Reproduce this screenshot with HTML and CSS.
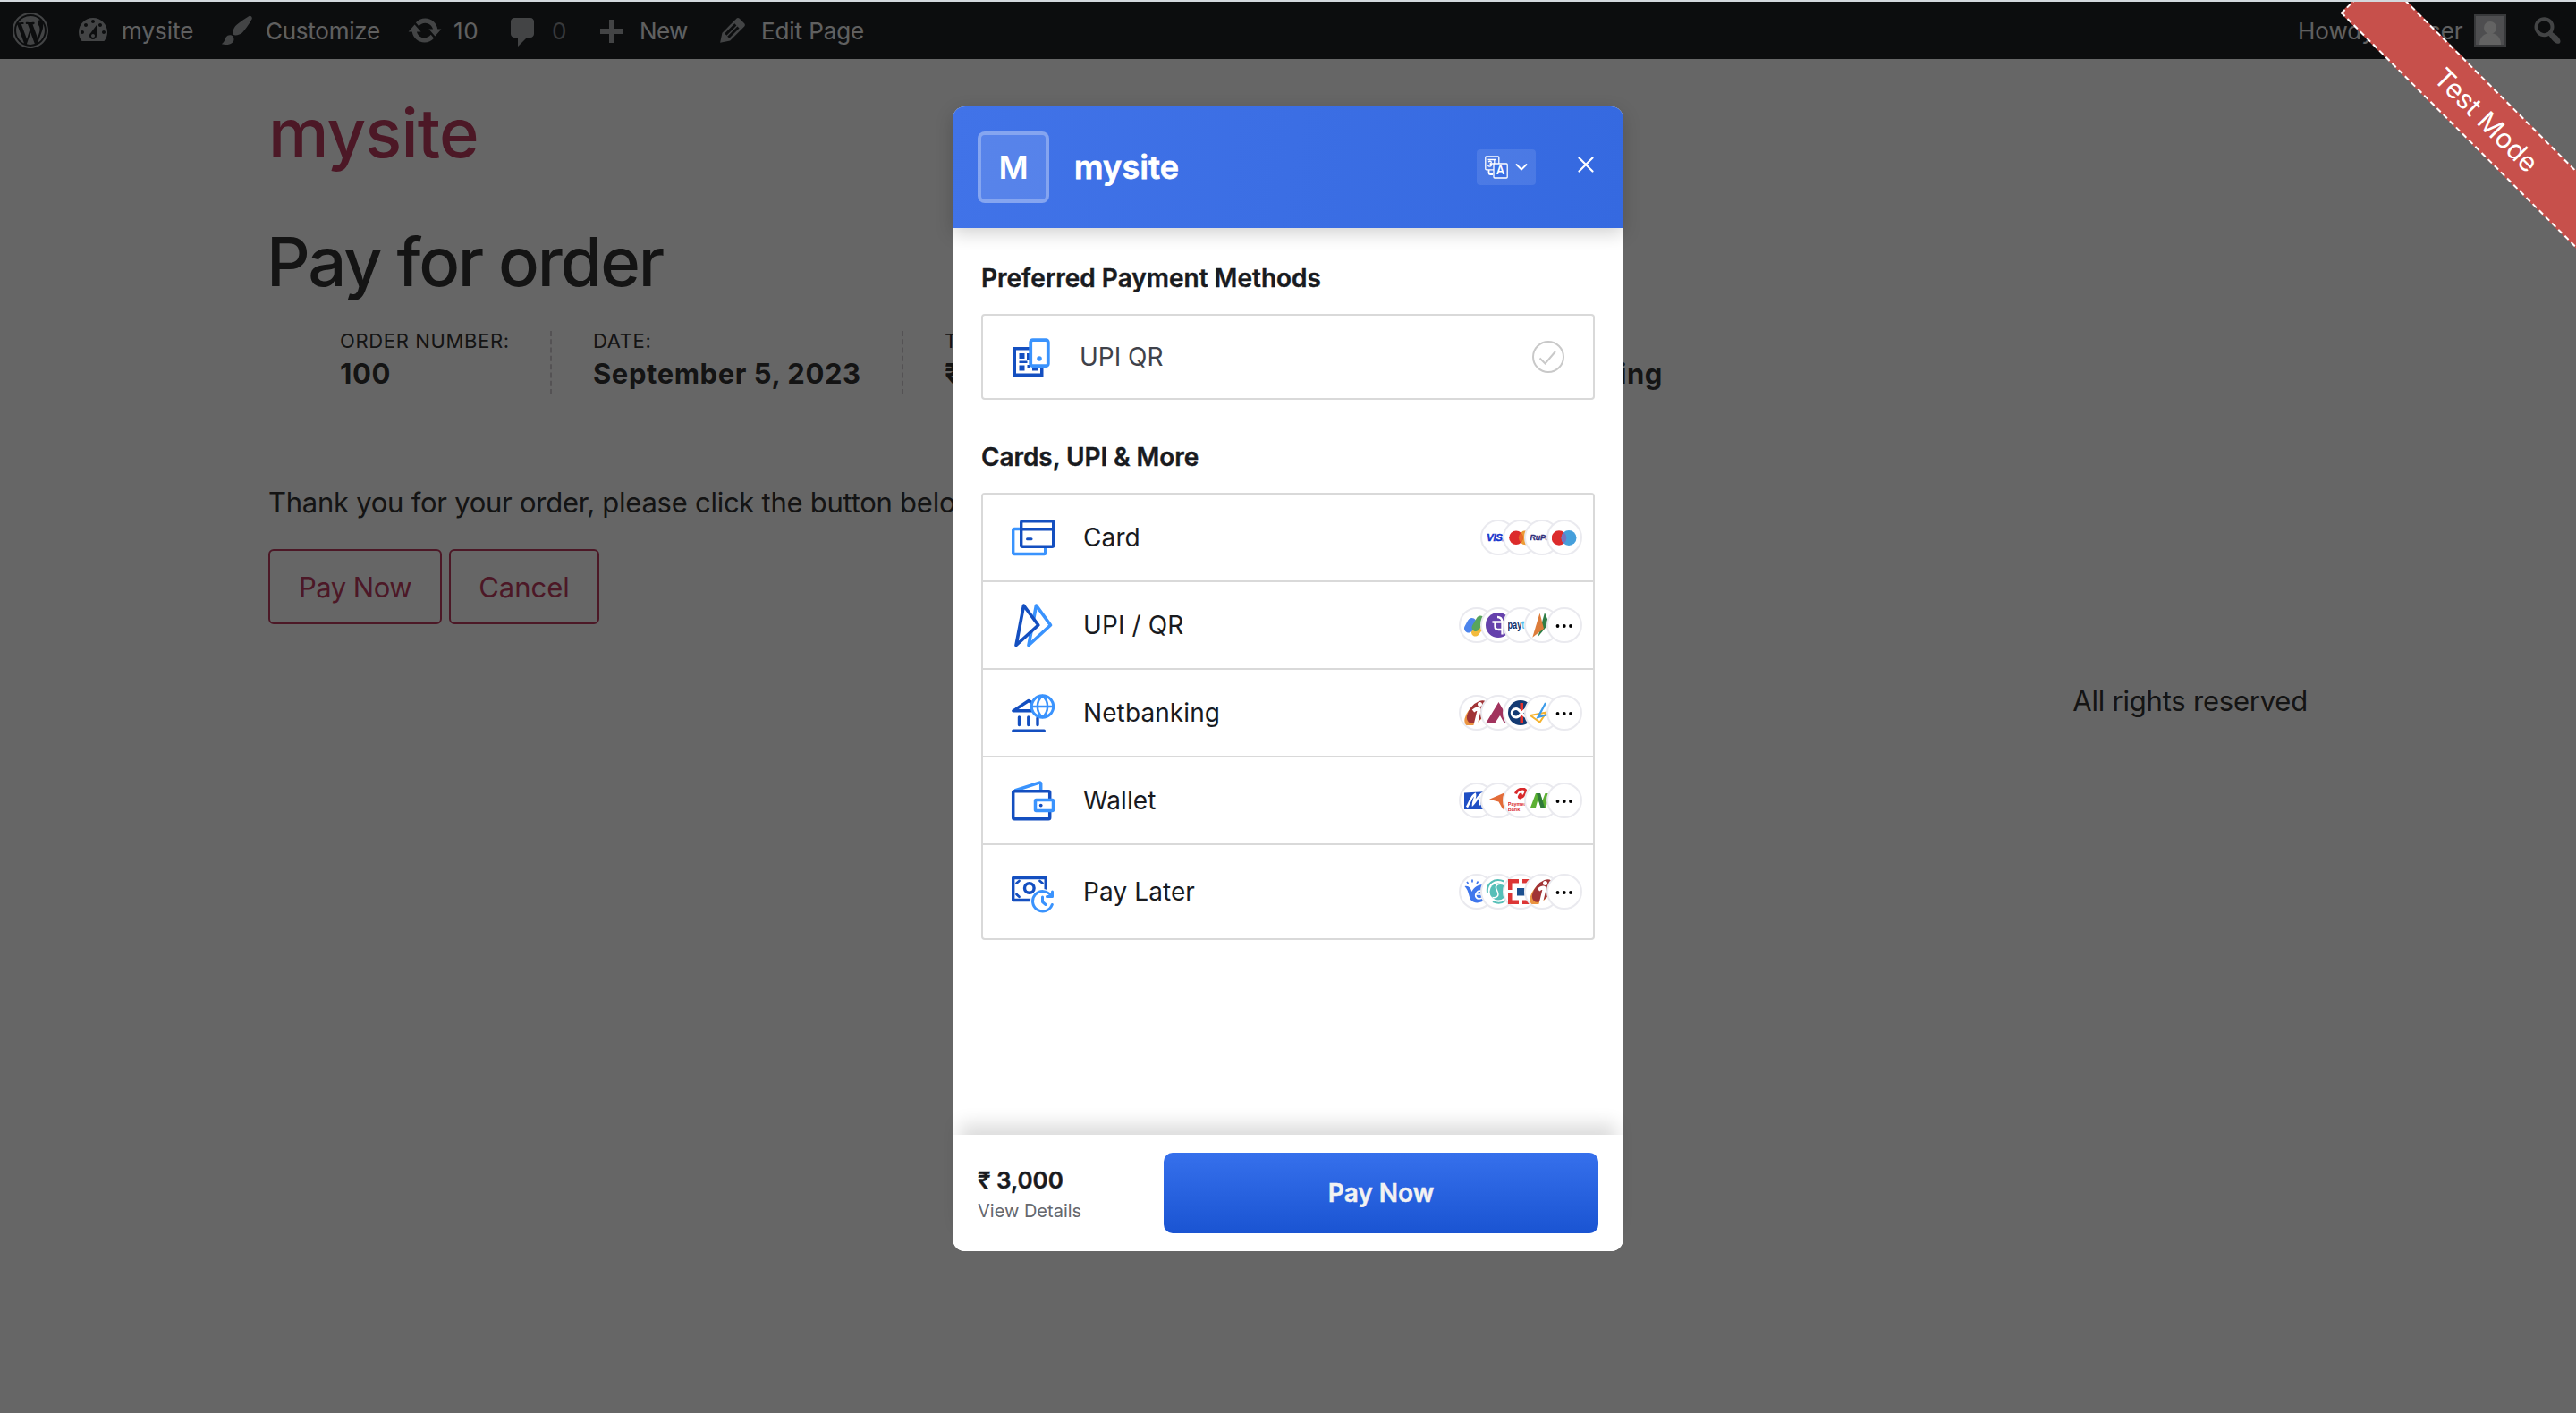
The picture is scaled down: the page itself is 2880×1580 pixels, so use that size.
FILE: index.html
```html
<!DOCTYPE html>
<html lang="en">
<head>
<meta charset="utf-8">
<title>Pay for order – mysite</title>
<link rel="stylesheet" href="styles.css">
</head>
<body>
<div class="window-edge"></div>
<div class="screen">

  <div class="adminbar">
    <div class="ab-item ab-logo"><svg class="dash" viewBox="0 0 20 20"><path d="M20 10c0-5.52-4.48-10-10-10S0 4.48 0 10s4.48 10 10 10 10-4.48 10-10zM10 1.01c4.97 0 8.99 4.02 8.99 8.99s-4.02 8.99-8.99 8.99S1.01 14.97 1.01 10 5.03 1.01 10 1.01zM8.01 14.82L4.96 6.61c.49-.03 1.05-.08 1.05-.08.43-.05.38-1.01-.06-.99 0 0-1.29.1-2.13.1-.15 0-.33 0-.52-.01 1.44-2.17 3.9-3.6 6.7-3.6 2.09 0 3.99.79 5.41 2.09-.6-.08-1.45.35-1.45 1.42 0 .66.38 1.22.79 1.88.31.54.5 1.22.5 2.21 0 1.34-1.27 4.48-1.27 4.48l-2.71-7.5c.48-.03.75-.16.75-.16.43-.05.38-1.1-.05-1.08 0 0-1.3.11-2.14.11-.78 0-2.11-.11-2.11-.11-.43-.02-.48 1.06-.05 1.08l.84.08 1.12 3.04zm6.02 2.15L16.64 10s.67-1.69.39-3.81c.63 1.14.94 2.42.94 3.81 0 2.96-1.56 5.58-3.94 6.97zM2.68 6.77L6.5 17.25c-2.67-1.3-4.47-4.08-4.47-7.25 0-1.16.2-2.23.65-3.23zm7.45 4.53l2.29 6.25c-.75.27-1.57.42-2.42.42-.72 0-1.41-.11-2.06-.3z"/></svg></div>
    <div class="ab-item ab-site"><svg class="dash" viewBox="0 0 20 20"><path fill-rule="evenodd" d="M3.76 16h12.48c1.1-1.37 1.76-3.11 1.76-5 0-4.42-3.58-8-8-8s-8 3.58-8 8c0 1.89.66 3.63 1.76 5zM10 4c.55 0 1 .45 1 1s-.45 1-1 1-1-.45-1-1 .45-1 1-1zM6 6c.55 0 1 .45 1 1s-.45 1-1 1-1-.45-1-1 .45-1 1-1zm8 0c.55 0 1 .45 1 1s-.45 1-1 1-1-.45-1-1 .45-1 1-1zm-5.37 5.55L12 7v6c0 1.1-.9 2-2 2s-2-.9-2-2c0-.57.24-1.08.63-1.45zM4 10c.55 0 1 .45 1 1s-.45 1-1 1-1-.45-1-1 .45-1 1-1zm12 0c.55 0 1 .45 1 1s-.45 1-1 1-1-.45-1-1 .45-1 1-1zm-5 3c0-.55-.45-1-1-1s-1 .45-1 1 .45 1 1 1 1-.45 1-1z"/></svg><span>mysite</span></div>
    <div class="ab-item ab-customize"><svg class="dash" viewBox="0 0 20 20"><path d="M18.33 3.57s.27-.8-.31-1.36c-.53-.52-1.22-.24-1.22-.24-.61.3-5.76 3.47-7.67 5.57-.86.96-2.06 3.79-1.09 4.82.92.98 3.96-.17 4.79-1 2.06-2.06 5.21-7.17 5.5-7.79zM1.4 17.65c2.37-1.56 1.46-3.41 3.23-4.64.93-.65 2.22-.62 3.08.29.63.67.8 2.57-.16 3.46-1.57 1.45-4 1.55-6.15.89z"/></svg><span>Customize</span></div>
    <div class="ab-item ab-updates"><svg class="dash" viewBox="0 0 20 20"><path d="M10.2 3.28c3.53 0 6.43 2.61 6.92 6h2.08l-3.5 4-3.5-4h2.32c-.45-1.97-2.21-3.45-4.32-3.45-1.45 0-2.73.71-3.54 1.78L4.95 5.66C6.23 4.2 8.11 3.28 10.2 3.28zm-.4 13.44c-3.52 0-6.43-2.61-6.92-6H.8l3.5-4c1.17 1.33 2.33 2.67 3.5 4H5.48c.45 1.97 2.21 3.45 4.32 3.45 1.45 0 2.73-.71 3.54-1.78l1.71 1.95c-1.28 1.46-3.15 2.38-5.25 2.38z"/></svg><span>10</span></div>
    <div class="ab-item ab-comments"><svg class="dash" viewBox="0 -1 20 20"><path d="M5 2h9c1.1 0 2 .9 2 2v7c0 1.1-.9 2-2 2h-2l-5 5v-5H5c-1.1 0-2-.9-2-2V4c0-1.1.9-2 2-2z"/></svg><span>0</span></div>
    <div class="ab-item ab-new"><svg class="dash" viewBox="0 -2 20 20"><path d="M17 7v3h-5v5H9v-5H4V7h5V2h3v5h5z"/></svg><span>New</span></div>
    <div class="ab-item ab-edit"><svg class="dash" viewBox="0 0 20 20"><path fill-rule="evenodd" d="M13.89 3.39l2.71 2.72c.46.46.42 1.24.03 1.64l-8.01 8.02-5.56 1.16 1.16-5.58s7.6-7.63 7.99-8.03c.39-.39 1.22-.39 1.68.07zm-2.73 2.79l-5.59 5.61 1.11 1.11 5.54-5.65zm-2.97 8.23l5.58-5.6-1.07-1.08-5.59 5.6z"/></svg><span>Edit Page</span></div>
    <div class="ab-account"><span>Howdy, user</span><svg class="avatar" viewBox="0 0 32 32"><path d="M0 0h32v32H0z" fill="#c3c4c7"/><circle cx="16" cy="13" r="7" fill="#f8f8f8"/><path d="M4 32c0-8 5-13 12-13s12 5 12 13z" fill="#f8f8f8"/></svg></div>
    <svg class="dash ab-search" viewBox="0 0 20 20"><path fill-rule="evenodd" d="M12.14 4.18c1.87 1.87 2.11 4.75.72 6.89.12.1.22.21.36.31.2.16.47.36.81.59.34.24.56.39.66.47.42.31.73.57.94.78.32.32.6.65.84 1 .25.35.44.69.59 1.04.14.35.21.68.18 1-.02.32-.14.59-.36.81s-.49.34-.81.36c-.31.02-.65-.04-.99-.19-.35-.14-.7-.34-1.04-.59-.35-.24-.68-.52-1-.84-.21-.21-.47-.52-.77-.93-.1-.13-.25-.35-.47-.66-.22-.32-.4-.57-.56-.78-.16-.2-.29-.35-.44-.5-2.07 1.09-4.69.76-6.44-.98-2.14-2.15-2.14-5.64 0-7.78 2.15-2.15 5.63-2.15 7.78 0zm-1.41 6.36c1.36-1.37 1.36-3.58 0-4.95-1.37-1.37-3.59-1.37-4.95 0-1.37 1.37-1.37 3.58 0 4.95 1.36 1.37 3.58 1.37 4.95 0z"/></svg>
  </div>

  <main class="page">
    <a class="site-title">mysite</a>
    <h1 class="page-title">Pay for order</h1>
    <ul class="order-details">
      <li class="od-number">Order number:<strong>100</strong></li>
      <li class="od-date">Date:<strong>September 5, 2023</strong></li>
      <li class="od-total">Total:<strong>₹3,000.00</strong></li>
      <li class="od-method">Payment method:<strong>Credit Card/Debit Card/NetBanking</strong></li>
    </ul>
    <p class="thanks">Thank you for your order, please click the button below to pay with Razorpay.</p>
    <div class="actions">
      <button class="btn btn-pay">Pay Now</button>
      <button class="btn btn-cancel">Cancel</button>
    </div>
    <footer class="site-footer">All rights reserved</footer>
  </main>

  <div class="backdrop">
    <div class="ribbon">Test Mode</div>

    <section class="checkout">
      <header class="co-header">
        <div class="co-logo">M</div>
        <div class="co-name">mysite</div>
        <div class="lang">
          <svg class="lang-icon" viewBox="0 0 26 26" fill="none" stroke="#fff" stroke-width="1.3">
            <rect x=".8" y=".8" width="15" height="15" rx="1"/>
            <path d="M3.5 4.5H13M10.8 4.5V13M4 7c2-1.500 4-.5 3 1.300-.4.700-1.500.7-1.500.7 2 0 2.500 1.500 1.500 2.500S4 12 3.500 11M7.500 9h3.300"/>
            <path d="M4.500 16v3.500q0 1.500 1.500 1.500h3" stroke-width="1.800"/>
            <rect x="10" y="9" width="15.200" height="16" rx="1" fill="#3b6fe4"/>
            <text x="17.600" y="21" text-anchor="middle" class="lang-letter">A</text>
          </svg>
          <svg class="lang-chevron" viewBox="0 0 14 10" fill="none" stroke="#fff" stroke-width="1.8" stroke-linecap="round" stroke-linejoin="round"><path d="M1.500 2 7 7.500 12.500 2"/></svg>
        </div>
        <svg class="close" viewBox="0 0 18 18" stroke="#fff" stroke-width="2.200" stroke-linecap="round"><path d="M1.500 1.500l15 15M16.500 1.500l-15 15"/></svg>
      </header>

      <div class="co-body">
        <h2 class="co-heading">Preferred Payment Methods</h2>
        <div class="preferred">
          <svg class="method-icon" viewBox="0 0 48 48">
            <path fill="#144fc0" fill-rule="evenodd" d="M1.500 13h34v33h-34zM5 16.500v26h27v-26z"/>
            <path fill="#144fc0" d="M8.500 20h6v6h-6zM8.500 33.500h6v6h-6zM23 35.500h6v4h-6zM17 20h3v7h-3zM8.500 28.500h9V31h-9zM17.500 33h3v3.500h-3z"/>
            <rect x="21.200" y="5.200" width="19.600" height="29" rx="2.500" fill="#fff" stroke="#3a93fd" stroke-width="3.800"/>
            <circle cx="31" cy="26" r="2.800" fill="#3a93fd"/>
          </svg>
          <span class="preferred-label">UPI QR</span>
          <svg class="check" viewBox="0 0 36 36" fill="none" stroke="#c9c9c9" stroke-width="2"><circle cx="18" cy="18" r="17"/><path d="M8.500 19.500l6 6L26 12"/></svg>
        </div>

        <h2 class="co-heading co-heading-second">Cards, UPI &amp; More</h2>
        <div class="methods">
          <div class="method">
            <svg class="method-icon" viewBox="0 0 48 48" fill="none" stroke-width="3.400">
              <rect x="1.700" y="14.500" width="36" height="28" rx="1.500" stroke="#3a93fd"/>
              <rect x="10.700" y="5.700" width="36" height="28.500" rx="1.500" stroke="#144fc0" fill="#fff"/>
              <path d="M10.500 14.800h36" stroke="#144fc0"/><path d="M17.500 25.800h4.500" stroke="#144fc0" stroke-width="3" stroke-linecap="round"/>
            </svg>
            <span class="method-label">Card</span>
            <div class="brands">
              <span class="brand"><svg viewBox="0 0 28 28"><text class="t-visa" x="1" y="18.300" textLength="26">VISA</text></svg></span>
              <span class="brand"><svg viewBox="0 0 28 28"><circle cx="19.800" cy="14.300" r="8" fill="#eb9b35"/><circle cx="9" cy="14.300" r="7.800" fill="#dc2b2b"/><path d="M14.400 8.500a8 8 0 0 1 0 11.600 8 8 0 0 1 0-11.600z" fill="#ea6a2b"/></svg></span>
              <span class="brand"><svg viewBox="0 0 28 28"><text class="t-rupay" x=".5" y="16.800" textLength="27">RuPay</text></svg></span>
              <span class="brand"><svg viewBox="0 0 28 28"><circle cx="8" cy="14.500" r="8.300" fill="#dc2b2b"/><circle cx="19" cy="14.500" r="8.500" fill="#459fdb"/><path d="M13.500 8.200a8.400 8.400 0 0 1 0 12.600 8.400 8.400 0 0 1 0-12.600z" fill="#7673c0"/></svg></span>
            </div>
          </div>

          <div class="method">
            <svg class="method-icon" viewBox="0 0 48 48" fill="none" stroke-width="3.700" stroke-linejoin="round">
              <path d="M27.500 2 43.500 24 19 46.500z" stroke="#3a93fd"/>
              <path d="M13.500 2 29.800 24 5 46.500z" stroke="#144fc0" fill="#fff"/>
            </svg>
            <span class="method-label">UPI / QR</span>
            <div class="brands">
              <span class="brand"><svg viewBox="0 0 28 28" stroke-linecap="round" stroke-linejoin="round" fill="none"><path d="M20 18.500l2-4" stroke="#e2493b" stroke-width="5"/><path d="M12.500 22l6.500-9" stroke="#f3bb3d" stroke-width="9"/><path d="M5 17.500l3.500-6.500" stroke="#4c84ec" stroke-width="10"/><path d="M13 16.500l5-8.500" stroke="#58a55c" stroke-width="9"/></svg></span>
              <span class="brand"><svg viewBox="0 0 28 28"><circle cx="14" cy="14" r="14" fill="#6541ac"/><path d="M7.500 10.500h13M18.500 10.500v14M10.500 11v4.500q0 3.500 4 3.500h3.500M13 5q5 0 5.500 5" fill="none" stroke="#fff" stroke-width="2.300"/></svg></span>
              <span class="brand"><svg viewBox="0 0 28 28"><text class="t-paytm" x="-.5" y="17.500" textLength="27" lengthAdjust="spacingAndGlyphs">pay<tspan fill="#4fc0f0">tm</tspan></text></svg></span>
              <span class="brand"><svg viewBox="0 0 28 28"><path d="M17 0 22 12 9.500 27z" fill="#2f7d46"/><path d="M11.500.5 16 18 3.300 27.700z" fill="#dd7d3b"/></svg></span>
              <span class="brand"><svg viewBox="0 0 28 28"><circle cx="6.500" cy="15" r="1.900"/><circle cx="13.800" cy="15" r="1.900"/><circle cx="21" cy="15" r="1.900"/></svg></span>
            </div>
          </div>

          <div class="method">
            <svg class="method-icon" viewBox="0 0 48 48" fill="none" stroke="#144fc0" stroke-width="3.400" stroke-linecap="round" stroke-linejoin="round">
              <path d="M26 21.800H1.800L19 10.500l8 4.800M8.500 29v8.500M18.800 29v8.500M29 30v7.500M1.800 44.300h34.500"/>
              <circle cx="34.500" cy="17" r="12.200" fill="#fff" stroke="#3a93fd" stroke-width="3"/>
              <path d="M22.500 17h24M34.500 5c-7.500 6-7.500 18 0 24M34.500 5c7.500 6 7.500 18 0 24" stroke="#3a93fd" stroke-width="2.500"/>
            </svg>
            <span class="method-label">Netbanking</span>
            <div class="brands">
              <span class="brand"><svg viewBox="0 0 28 28"><use href="#icici"/></svg></span>
              <span class="brand"><svg viewBox="0 0 28 28"><path d="M14.500 2 28.500 26H21L16 17 10 26H0z" fill="#a1335d"/></svg></span>
              <span class="brand"><svg viewBox="0 0 28 28"><circle cx="14" cy="14" r="14" fill="#143a72"/><path d="M13.500 3h3.500v22h-3.500z" fill="#e5322d"/><path d="M22 9.500c-5 0-8 9.500-13 9.500a4.700 4.700 0 0 1 0-9.500c5 0 7 9.500 13 9.500" fill="none" stroke="#fff" stroke-width="3"/></svg></span>
              <span class="brand"><svg viewBox="0 0 28 28" fill="none" stroke-width="2"><path d="M1 17 19 13.500 11.500 24.500z" stroke="#f5b32f"/><path d="M18 3 9.500 19 22 15.500" stroke="#3c9be9" stroke-width="2.200"/></svg></span>
              <span class="brand"><svg viewBox="0 0 28 28"><circle cx="6.500" cy="15" r="1.900"/><circle cx="13.800" cy="15" r="1.900"/><circle cx="21" cy="15" r="1.900"/></svg></span>
            </div>
          </div>

          <div class="method">
            <svg class="method-icon" viewBox="0 0 48 48" fill="none" stroke-width="3.500" stroke-linejoin="round">
              <path d="M3.500 13 31 4.200q1.700-.4 1.700 1.300V13" stroke="#3a93fd"/>
              <rect x="1.700" y="13.800" width="41" height="31" rx="1.500" stroke="#144fc0"/>
              <rect x="26.500" y="23.500" width="20" height="12" rx="1" stroke="#3a93fd" fill="#fff"/>
              <circle cx="32.700" cy="29.600" r="1.900" fill="#144fc0"/>
            </svg>
            <span class="method-label">Wallet</span>
            <div class="brands">
              <span class="brand"><svg viewBox="0 0 28 28"><path d="M0 5.500 26 4v20H0z" fill="#1f4fc4"/><path d="M3 21.500C6 17 8 9 12 7c1 3-2 8-2 11 3-3 6-9 9-11 1 4-3 8-1.500 12.500" fill="none" stroke="#fff" stroke-width="2.500"/></svg></span>
              <span class="brand"><svg viewBox="0 0 28 28"><path d="M4 12.700 23 4.500 19.500 24.500 14.500 15.500z" fill="#e36c38"/></svg></span>
              <span class="brand"><svg viewBox="0 0 28 28"><path d="M8.500 6.500C10 1.500 17-.500 19.500 2.500c1.500 3.500-3 8-6 8.500-2 .2-1.500-3 2-4.500" fill="none" stroke="#d8292b" stroke-width="3"/><text class="t-airtel" x="-.2" y="20">Payments</text><text class="t-airtel" x="-.2" y="26">Bank</text></svg></span>
              <span class="brand"><svg viewBox="0 0 28 28"><path d="M1 22 7 6h5l2.500 8L17.500 6H24L18 22h-5.500L9.500 13 7 22z" fill="#5cb033"/><path d="M8 6h4l5 16h-4.500z" fill="#2f7a3a"/></svg></span>
              <span class="brand"><svg viewBox="0 0 28 28"><circle cx="6.500" cy="15" r="1.900"/><circle cx="13.800" cy="15" r="1.900"/><circle cx="21" cy="15" r="1.900"/></svg></span>
            </div>
          </div>

          <div class="method method-last">
            <svg class="method-icon" viewBox="0 0 48 48" fill="none" stroke="#144fc0" stroke-width="3.400" stroke-linecap="round" stroke-linejoin="round">
              <rect x="1.700" y="8.500" width="36.500" height="25"/>
              <circle cx="19.800" cy="20" r="5.300"/>
              <path d="M5.500 14.500 8.500 12M31.500 12l3 2.500M5.500 27l3 2.800" stroke-width="2.800"/>
              <circle cx="34.500" cy="34.500" r="13.500" fill="#fff" stroke="none"/>
              <path d="M45.300 38.500A11.200 11.200 0 1 1 44 28.500M45.500 24v5.500h-6M34.500 30v5.500l3.500 3" stroke="#3a93fd" stroke-width="3"/>
            </svg>
            <span class="method-label">Pay Later</span>
            <div class="brands">
              <span class="brand"><svg viewBox="0 0 28 28"><path d="M.5 8c5-1 7 3 8 6 2-5 7-8 16-8.500v16C20 27 12 28 8 24 5 21 6 14 .5 8z" fill="#3f76ec"/><path d="M13 17h6c3-4-3-5-5-2-3 4 0 9 6 6" fill="none" stroke="#fff" stroke-width="1.700"/><path d="M4.500 5 3 3M9 3.500V.5M14 5l1.500-2.500" stroke="#3f76ec" stroke-width="1.700"/></svg></span>
              <span class="brand"><svg viewBox="0 0 28 28"><circle cx="14" cy="14" r="9.500" fill="#56bfb8"/><path d="M20.500 2.500C9.500-2 .5 5 2 15M8 25C18.500 30 27.500 22 26 13" fill="none" stroke="#56bfb8" stroke-width="2"/><path d="M20.500 6c-7-2-11 1-8 6.500s1 9-5 8" fill="none" stroke="#fff" stroke-width="1.500"/></svg></span>
              <span class="brand"><svg viewBox="0 0 28 28"><path d="M0 0h12v4.500H4.500V12H0zM16 0h12v12h-4.500V4.500H16zM0 16h4.500v7.500H12V28H0zM23.500 16H28v12H16v-4.500h7.500z" fill="#dc3636"/><path d="M10 10h8.500v8.500H10z" fill="#1c4f8e"/></svg></span>
              <span class="brand"><svg viewBox="0 0 28 28"><g id="icici"><ellipse cx="12.500" cy="15.500" rx="16" ry="8.500" transform="rotate(-50 12.500 15.500)" fill="#ea9440"/><ellipse cx="14.500" cy="13" rx="15" ry="8.500" transform="rotate(-50 14.500 13)" fill="#a13436"/><circle cx="17.500" cy="4.500" r="2.500" fill="#fff"/><path d="M10 12c4-3 7.500-3.500 6.500-.5L12.500 28" fill="none" stroke="#fff" stroke-width="4"/></g></svg></span>
              <span class="brand"><svg viewBox="0 0 28 28"><circle cx="6.500" cy="15" r="1.900"/><circle cx="13.800" cy="15" r="1.900"/><circle cx="21" cy="15" r="1.900"/></svg></span>
            </div>
          </div>
        </div>
      </div>

      <footer class="co-footer">
        <div class="amount">
          <span class="amount-value">₹ 3,000</span>
          <span class="amount-details">View Details</span>
        </div>
        <button class="co-pay">Pay Now</button>
      </footer>
    </section>
  </div>
</div>
</body>
</html>
```
FILE: styles.css
```css
* { box-sizing: border-box; }
body {
  margin: 0;
  width: 2880px;
  height: 1580px;
  overflow: hidden;
  display: flex;
  flex-direction: column;
  font-family: Inter, "Noto Sans", sans-serif;
  color: #333;
  background: #fff;
}
.window-edge { height: 2px; flex: none; background: #d3d8dd; }
.screen { position: relative; flex: 1; overflow: hidden; }

/* WordPress toolbar */
.adminbar {
  display: flex;
  align-items: center;
  height: 64px;
  padding-left: 14px;
  background: #1f2225;
  color: #f0f0f1;
  font-size: 26px;
}
.dash { width: 40px; height: 40px; flex: none; fill: #a7aaad; }
.ab-item { display: flex; align-items: center; gap: 12px; flex: none; white-space: nowrap; }
.ab-logo { width: 70px; }
.ab-site { width: 161px; }
.ab-customize { width: 210px; letter-spacing: -.25px; }
.ab-updates { width: 110px; letter-spacing: .6px; }
.ab-comments { width: 98px; color: #8c8f93; }
.ab-new { width: 136px; letter-spacing: -.6px; }
.ab-edit { letter-spacing: -.1px; }
.ab-account { display: flex; align-items: center; width: 233px; margin-left: auto; word-spacing: 31px; white-space: nowrap; }
.avatar { width: 36px; height: 36px; margin-left: auto; border: 2px solid #8c8f94; }
.ab-search { margin: 0 12px 0 26px; }

/* Site page */
.page { width: 2280px; margin-left: 300px; padding-top: 42px; }
.site-title {
  display: block;
  line-height: 80px;
  font-size: 76px;
  font-weight: 500;
  letter-spacing: -.85px;
  color: #be3c60;
}
.page-title {
  margin: 64px 0 0;
  line-height: 80px;
  font-size: 76px;
  font-weight: 500;
  letter-spacing: -2.2px;
  text-indent: -2px;
}
.order-details {
  display: flex;
  width: 1559px;
  margin: 38px 0 0;
  padding: 0 0 0 80px;
  list-style: none;
}
.order-details li {
  height: 71px;
  border-right: 2px dashed #d3ced2;
  font-size: 22px;
  line-height: 22px;
  letter-spacing: .65px;
  text-transform: uppercase;
  white-space: nowrap;
}
.order-details strong {
  display: block;
  line-height: 51px;
  font-size: 31px;
  letter-spacing: .57px;
  text-transform: none;
}
.od-number { width: 237px; }
.od-date { width: 393px; padding-left: 46px; }
.od-total { width: 240px; padding-left: 46px; }
.order-details .od-method { border: 0; margin-left: auto; }
.thanks { margin: 101px 0 0; line-height: 40px; font-size: 31px; letter-spacing: -.26px; }
.actions { display: flex; gap: 8px; margin-top: 32px; }
.btn {
  height: 84px;
  padding: 0;
  border: 2px solid #be3c60;
  border-radius: 6px;
  background: none;
  color: #be3c60;
  font: 400 31px Inter, sans-serif;
}
.btn-pay { width: 194px; letter-spacing: -.5px; }
.btn-cancel { width: 168px; }
.site-footer { margin-top: 66px; line-height: 40px; font-size: 31px; letter-spacing: -.21px; text-align: right; }

/* Dimmed layer over the page, holding the checkout dialog */
.backdrop { position: absolute; inset: 0; background: rgba(0, 0, 0, .6); }
.ribbon {
  position: absolute;
  left: 2580px;
  top: 101px;
  width: 400px;
  height: 62px;
  line-height: 58px;
  border: 2px dashed #fff;
  background: #c7504b;
  color: #fff;
  font-size: 30px;
  text-align: center;
  transform: rotate(45deg);
}
.checkout {
  display: flex;
  flex-direction: column;
  width: 750px;
  height: 1280px;
  margin: 117px 0 0 1065px;
  border-radius: 14px;
  background: #fff;
}
.co-header {
  display: flex;
  align-items: center;
  height: 136px;
  padding: 0 28px;
  border-radius: 14px 14px 0 0;
  background: linear-gradient(100deg, #4173e8, #3569e0);
  box-shadow: 0 6px 20px rgba(0, 0, 0, .18);
  color: #fff;
  font-size: 36px;
  font-weight: 600;
}
.co-logo {
  width: 80px;
  height: 80px;
  line-height: 72px;
  border: 4px solid rgba(255, 255, 255, .28);
  border-radius: 8px;
  background: rgba(255, 255, 255, .12);
  text-align: center;
}
.co-name { margin-left: 28px; letter-spacing: .25px; -webkit-text-stroke: .8px currentColor; }
.lang {
  display: flex;
  align-items: center;
  justify-content: space-between;
  width: 66px;
  height: 40px;
  margin-left: auto;
  padding: 0 9px;
  border-radius: 4px;
  background: rgba(255, 255, 255, .1);
}
.lang-icon { width: 26px; height: 26px; }
.lang-letter { font: 600 13px Inter, sans-serif; fill: #fff; stroke: none; }
.lang-chevron { width: 14px; height: 10px; }
.close { width: 18px; height: 18px; margin: 0 5px 6px 47px; }

.co-body { flex: 1; padding: 36px 32px 0; }
.co-heading {
  margin: 0 0 20px;
  line-height: 40px;
  font-size: 28px;
  font-weight: 600;
  color: #191b1f;
  -webkit-text-stroke: .4px currentColor;
}
.co-heading-second { margin-top: 44px; letter-spacing: -.08px; }
.preferred {
  display: flex;
  align-items: center;
  height: 96px;
  padding: 0 32px;
  border: 2px solid #d9d9d9;
  border-radius: 4px;
}
.preferred-label { margin-left: 28px; font-size: 28px; color: #3f424a; }
.check { width: 36px; height: 36px; margin-left: auto; }
.method-icon { width: 48px; height: 48px; flex: none; overflow: visible; }
.methods { border: 2px solid #d9d9d9; border-radius: 4px; }
.method {
  display: flex;
  align-items: center;
  height: 98px;
  padding: 0 12px 0 32px;
  border-bottom: 2px solid #d9d9d9;
}
.method-last { height: 104px; border-bottom: 0; }
.method-label { margin-left: 32px; font-size: 28px; letter-spacing: .1px; color: #191b1f; }
.brands { display: flex; margin-left: auto; }
.brand {
  width: 40px;
  height: 40px;
  padding: 4px;
  border: 2px solid #eaeaef;
  border-radius: 50%;
  background: #fff;
}
.brand + .brand { margin-left: -15.4px; }
.brand svg { display: block; width: 28px; height: 28px; }
.t-visa { font: italic 700 11.5px "Liberation Sans", sans-serif; fill: #1434cb; stroke: #1434cb; stroke-width: .4px; }
.t-rupay { font: italic 700 9px "Liberation Sans", sans-serif; fill: #312f7b; stroke: #312f7b; stroke-width: .3px; }
.t-paytm { font: 700 12px "Liberation Sans", sans-serif; fill: #0f2c62; stroke: currentColor; stroke-width: 0; }
.t-airtel { font: 700 5.5px "Liberation Sans", sans-serif; fill: #d8292b; }

.co-footer {
  display: flex;
  align-items: center;
  justify-content: space-between;
  height: 130px;
  padding: 0 28px;
  border-radius: 0 0 14px 14px;
  background: #fff;
  box-shadow: 0 -20px 20px -8px rgba(0, 0, 0, .14);
}
.amount { display: flex; flex-direction: column; }
.amount-value {
  line-height: 39px;
  font-size: 26px;
  font-weight: 600;
  letter-spacing: -.05px;
  color: #191b1f;
  -webkit-text-stroke: .4px currentColor;
}
.amount-details { line-height: 30px; font-size: 20px; color: #66686e; }
.co-pay {
  width: 486px;
  height: 90px;
  border: 0;
  border-radius: 10px;
  background: linear-gradient(#3670ec, #1a54d2);
  color: #f2f2f2;
  font: 600 28px Inter, sans-serif;
  -webkit-text-stroke: .4px currentColor;
}
```
